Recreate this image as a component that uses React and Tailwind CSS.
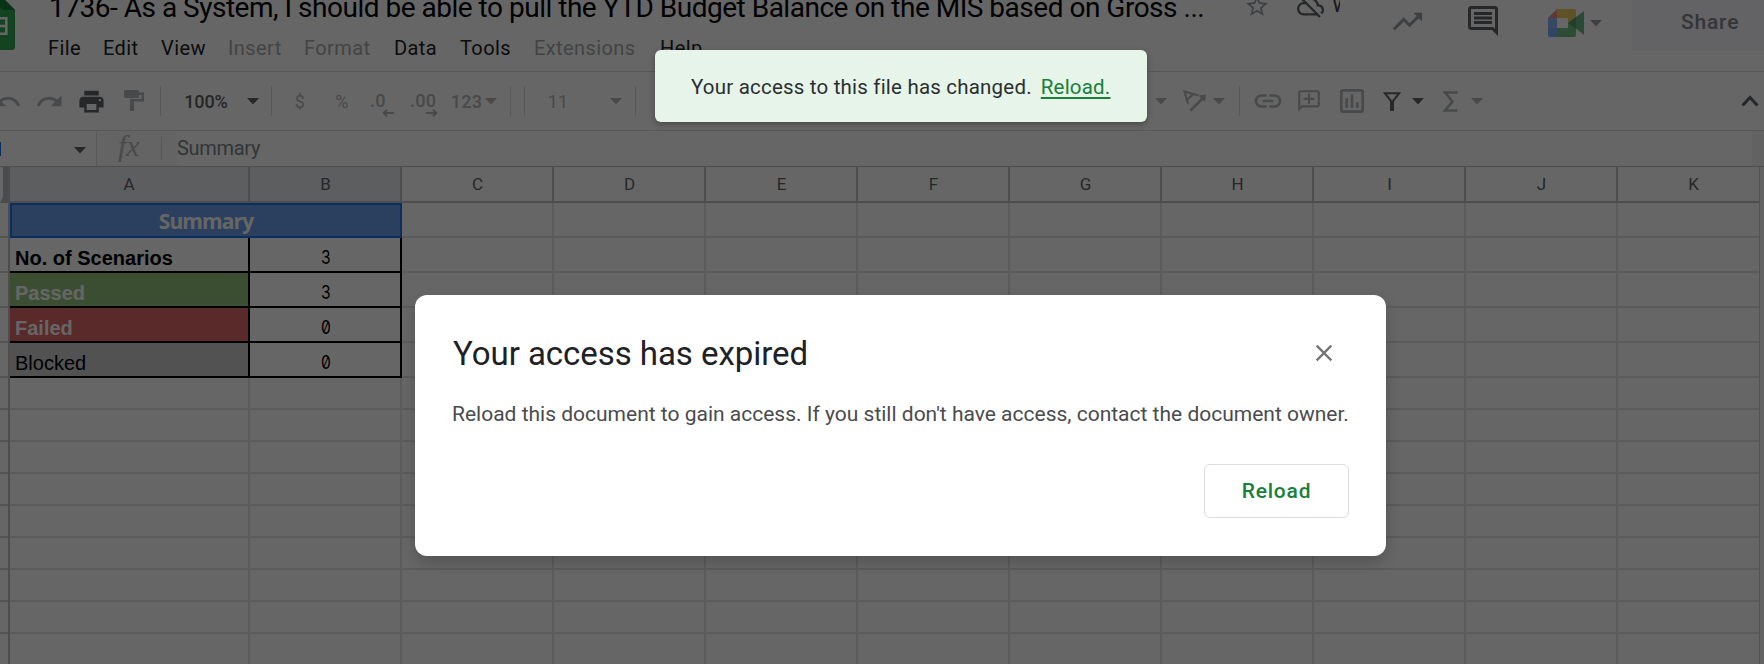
import { MdUndo, MdRedo, MdPrint, MdLink, MdOutlineAddComment, MdOutlineInsertChart, MdStarBorder, MdOutlineCloudOff, MdTrendingUp, MdOutlineInsertComment, MdClose } from "react-icons/md";

const menus = [
  ["File", "w-[55px]", true],
  ["Edit", "w-[58px]", true],
  ["View", "w-[67px]", true],
  ["Insert", "w-[76px]", false],
  ["Format", "w-[90px]", false],
  ["Data", "w-[66px]", true],
  ["Tools", "w-[74px]", true],
  ["Extensions", "w-[126px]", false],
  ["Help", "w-[60px]", true],
];

const letters = ["C", "D", "E", "F", "G", "H", "I", "J", "K"];

const rows = [
  ["No. of Scenarios", "3", "font-bold text-black"],
  ["Passed", "3", "font-bold text-white bg-[#93c47d]"],
  ["Failed", "0", "font-bold text-white bg-[#e06666]"],
  ["Blocked", "0", "text-black bg-[#cccccc]"],
];

function Caret({ className = "" }) {
  return (
    <svg viewBox="0 0 12 7" className={`h-[7px] w-3 shrink-0 ${className}`}>
      <path d="M0 0h12L6 6.5z" fill="currentColor" />
    </svg>
  );
}

function Sep({ className = "" }) {
  return <div className={`h-[30px] w-px shrink-0 bg-[#dadce0] ${className}`} />;
}

function Slot({ className, children }) {
  return <div className={`flex h-full shrink-0 items-center justify-center ${className}`}>{children}</div>;
}

function DecimalArrow({ right = false }) {
  return (
    <svg viewBox="0 0 12 8" className={`h-2 w-3 ${right ? "-scale-x-100" : ""}`}>
      <path d="M12 4H2M5 .8 1.800 4 5 7.200" fill="none" stroke="currentColor" strokeWidth="2" />
    </svg>
  );
}

function Header() {
  return (
    <header className="flex h-[71px] shrink-0">
      <svg viewBox="0 0 15 50" className="h-[50px] w-[15px] shrink-0">
        <path d="M0 0h5L15 10v37a3 3 0 0 1-3 3H0z" fill="#34a853" />
        <path d="M0 0h5L15 10H3L0 7z" fill="#188038" />
        <path d="M0 18.200h6.300V33.700H0M0 26h6" fill="none" stroke="#fff" strokeWidth="2.600" />
      </svg>
      <div className="ml-[33px] flex w-[1300px] flex-col">
        <div className="flex h-[34px] items-start">
          <div className="-mt-[10px] ml-px w-[1195px] shrink-0 whitespace-nowrap text-[28px] leading-9 tracking-[-0.49px] text-black">
            1736- As a System, I should be able to pull the YTD Budget Balance on the MIS based on Gross ...
          </div>
          <MdStarBorder className="-mt-[7px] size-[26px] shrink-0 text-[#9aa0a6]" />
          <MdOutlineCloudOff className="-mt-[7px] ml-[27px] size-[27px] shrink-0 text-[#5f6368]" />
          <div className="-mt-[9px] ml-[8px] w-[8px] overflow-hidden text-[21px] leading-7 text-[#3c4043]">W</div>
        </div>
        <nav className="flex h-7 items-center text-[20px] tracking-[0.4px]">
          {menus.map(([label, width, enabled]) => (
            <div key={label} className={`${width} shrink-0 ${enabled ? "text-[#202124]" : "text-[#a8aaad]"}`}>{label}</div>
          ))}
        </nav>
      </div>
      <div className="ml-auto flex h-[50px] items-start">
        <MdTrendingUp className="mt-[4px] size-[35px] text-[#9aa0a6]" />
        <MdOutlineInsertComment className="ml-[40px] mt-[3px] size-9 text-[#5f6368]" />
        <svg viewBox="0 0 36 28" className="ml-[47px] mt-[9px] h-7 w-9">
          <path d="M0 9h9v10H0z" fill="#8ab4f8" />
          <path d="M0 9 9 0v9z" fill="#f28b82" />
          <path d="M9 9h11v10H9z" fill="#fff" />
          <path d="M9 0h17a2 2 0 0 1 2 2v6l-8 6V9H9z" fill="#f0cc62" />
          <path d="M0 19h9v9H2a2 2 0 0 1-2-2z" fill="#7baaf7" />
          <path d="M9 19h11v-5l8-6v18a2 2 0 0 1-2 2H9z" fill="#76be8a" />
          <path d="M20 14 36 2v24l-8-6.500z" fill="#6dba85" />
          <path d="M20 14 28 8v12z" fill="#579d6b" />
        </svg>
        <Caret className="ml-[6px] mt-[20px] text-[#9aa0a6]" />
        <div className="ml-[30px] flex h-[50px] w-[132px] items-start bg-[#f8f8fd] pl-[49px] pt-[8px] text-[21px] font-medium leading-7 tracking-[0.8px] text-[#80868b]">Share</div>
      </div>
    </header>
  );
}

function Toolbar() {
  return (
    <div className="flex h-[60px] shrink-0 items-center border-y border-[#dadce0] text-[18px] tracking-[0.2px] text-[#b4b6b9]">
      <Slot className="w-[14px]"><MdUndo className="size-[29px] shrink-0" /></Slot>
      <Slot className="ml-[17px] w-9"><MdRedo className="size-[29px]" /></Slot>
      <Slot className="ml-[6px] w-9 text-[#5f6368]"><MdPrint className="size-[29px]" /></Slot>
      <Slot className="ml-[7px] w-9">
        <svg viewBox="0 0 20 22" className="h-[22px] w-5">
          <path d="M1.500 0h12A1.500 1.500 0 0 1 15 1.500V2.500h5v9H10V21H6V9h11.500V5H15v1.500A1.500 1.500 0 0 1 13.500 8h-12A1.500 1.500 0 0 1 0 6.500v-5A1.500 1.500 0 0 1 1.500 0z" fill="currentColor" />
        </svg>
      </Slot>
      <Sep className="ml-2" />
      <Slot className="ml-[23px] w-11 font-medium tracking-[-0.1px] text-[#5f6368]">100%</Slot>
      <Caret className="ml-[19px] text-[#5f6368]" />
      <Sep className="ml-3" />
      <Slot className="ml-[18px] w-5">$</Slot>
      <Slot className="ml-[22px] w-5">%</Slot>
      <div className="ml-[18px] flex w-[26px] shrink-0 flex-col pt-[5px] font-medium leading-5">.0<span className="-mt-[2px] ml-3 leading-3"><DecimalArrow /></span></div>
      <div className="ml-[14px] flex w-[30px] shrink-0 flex-col pt-[5px] font-medium leading-5">.00<span className="-mt-[2px] ml-4 leading-3"><DecimalArrow right /></span></div>
      <Slot className="ml-3 w-[29px] font-medium">123</Slot>
      <Caret className="ml-1" />
      <Sep className="ml-[13px]" />
      <Sep className="ml-[13px]" />
      <Slot className="ml-6 w-[18px]">11</Slot>
      <Caret className="ml-[43px]" />
      <Sep className="ml-[13px]" />
      <Caret className="ml-[519px]" />
      <Slot className="ml-[14px] w-7">
        <svg viewBox="0 0 24 22" className="h-[22px] w-6">
          <path d="M5 13.500 1.500 1.500 15.500 5.500M4 9.500 10.500 4" fill="none" stroke="currentColor" strokeWidth="2.200" />
          <path d="M7.500 20.500 20.500 7.500" fill="none" stroke="currentColor" strokeWidth="2.600" />
          <path d="M15.500 5.500 23 4.500 22 12z" fill="currentColor" />
        </svg>
      </Slot>
      <Caret className="ml-1" />
      <Sep className="ml-[14px]" />
      <Slot className="ml-[14px] w-7"><MdLink className="size-8 shrink-0" /></Slot>
      <Slot className="ml-[13px] w-7"><MdOutlineAddComment className="size-[26px] -scale-x-100" /></Slot>
      <Slot className="ml-[15px] w-7"><MdOutlineInsertChart className="size-8 shrink-0" /></Slot>
      <Slot className="ml-3 w-7 text-[#5f6368]">
        <svg viewBox="0 0 18 19" className="h-[19px] w-[18px]">
          <path d="M1.800 1.200h14.400L10 9.200V18H8V9.200z" fill="none" stroke="currentColor" strokeWidth="2" />
        </svg>
      </Slot>
      <Caret className="ml-[6px] text-[#5f6368]" />
      <Slot className="ml-3 w-7">
        <svg viewBox="0 0 16 21" className="h-[21px] w-4">
          <path d="M15.500 1.500H3L10.500 10.500 3 19.500h12.500" fill="none" stroke="currentColor" strokeWidth="2.600" />
        </svg>
      </Slot>
      <Caret className="ml-[7px]" />
      <Slot className="ml-auto mr-1 w-5 text-[#5f6368]">
        <svg viewBox="0 0 18 12" className="h-3 w-[18px]">
          <path d="m1.500 10.500 7.500-8 7.500 8" fill="none" stroke="currentColor" strokeWidth="3" />
        </svg>
      </Slot>
    </div>
  );
}

function FormulaBar() {
  return (
    <div className="flex h-9 shrink-0 items-center border-b border-[#c0c0c0]">
      <div className="h-[14px] w-px bg-[#1a73e8]" />
      <Caret className="ml-[73px] mt-1 text-[#5f6368]" />
      <div className="ml-[10px] flex h-full w-[81px] items-center border-l border-[#dadce0] bg-[#fafafa]">
        <div className="-mt-[6px] ml-[21px] w-[43px] font-['Liberation_Serif'] text-[30px] italic leading-8 text-[#b8b8b8]">fx</div>
        <div className="h-6 w-px bg-[#dadce0]" />
      </div>
      <div className="-mt-[2px] text-[20px] tracking-[-0.3px] text-[#80868b]">Summary</div>
      <div className="ml-auto h-full w-3 bg-[#f6f6f6]" />
    </div>
  );
}

function Sheet() {
  return (
    <div className="flex min-h-0 flex-1 overflow-hidden">
      <div className="w-[10px] shrink-0 border-r-2 border-[#c0c0c0]">
        <div className="h-9 border-b-[6px] border-l-[3px] border-b-[#bcbcbc] border-l-white bg-[#bcbcbc]" />
        {[0, 1, 2, 3, 4].map((i) => <div key={i} className="h-[35px] border-b-2 border-[#d0d0d0]" />)}
        {[0, 1, 2, 3, 4, 5, 6, 7, 8, 9].map((i) => <div key={i} className="h-8 border-b-2 border-[#d0d0d0]" />)}
      </div>
      <div className="flex w-[1750px] shrink-0 flex-col overflow-hidden border-r border-[#d0d0d0]">
        <div className="flex h-9 shrink-0 text-center text-[17px] leading-[35px] text-[#5f6368]">
          <div className="w-60 shrink-0 border-b-2 border-r-2 border-[#c0c0c0] bg-[#e8eaed]">A</div>
          <div className="w-[152px] shrink-0 border-b-2 border-r-2 border-[#c0c0c0] bg-[#e8eaed] pl-px">B</div>
          {letters.map((l) => <div key={l} className="w-[152px] shrink-0 border-b-2 border-r-2 border-[#c0c0c0] pl-px">{l}</div>)}
        </div>
        <div className="flex h-[35px] shrink-0">
          <div className="flex w-[392px] shrink-0 items-center justify-center border-2 border-[#1a73e8] bg-[#6d9eeb] font-['Open_Sans'] text-[21px] font-bold leading-7 tracking-[-0.9px] text-white">Summary</div>
          {letters.map((l) => <div key={l} className="w-[152px] shrink-0 border-b-2 border-r-2 border-[#e2e3e3]" />)}
        </div>
        {rows.map(([name, value, style]) => (
          <div key={name} className="flex h-[35px] shrink-0">
            <div className={`w-60 shrink-0 border-b-2 border-r-2 border-black pl-[5px] pt-[6px] font-['Liberation_Sans'] text-[20px] leading-7 ${style}`}>{name}</div>
            <div className="w-[152px] shrink-0 border-b-2 border-r-2 border-black pl-px pt-[6px] text-center font-['Inter'] text-[19px] leading-7 text-black">
              <span className="inline-block scale-x-[0.82] slashed-zero">{value}</span>
            </div>
            {letters.map((l) => <div key={l} className="w-[152px] shrink-0 border-b-2 border-r-2 border-[#e2e3e3]" />)}
          </div>
        ))}
        {[0, 1, 2, 3, 4, 5, 6, 7, 8, 9].map((i) => (
          <div key={i} className="flex h-8 shrink-0">
            <div className="w-60 shrink-0 border-b-2 border-r-2 border-[#e2e3e3]" />
            <div className="w-[152px] shrink-0 border-b-2 border-r-2 border-[#e2e3e3]" />
            {letters.map((l) => <div key={l} className="w-[152px] shrink-0 border-b-2 border-r-2 border-[#e2e3e3]" />)}
          </div>
        ))}
      </div>
      <div className="flex-1 bg-[#f8f8f8]" />
    </div>
  );
}

export default function App() {
  return (
    <div className="relative flex h-[664px] w-[1764px] flex-col overflow-hidden bg-white font-['Roboto',sans-serif]">
      <Header />
      <Toolbar />
      <FormulaBar />
      <Sheet />
      <div className="absolute inset-0 bg-black/60" />
      <div className="absolute left-[655px] top-[50px] flex h-[72px] w-[492px] items-center rounded-[6px] bg-[#e6f4ea] pl-[36px] pt-[2px] text-[20.5px] tracking-[0.2px] text-[#2c2e31] shadow-[0_2px_6px_rgba(0,0,0,0.3)]">
        <span className="whitespace-nowrap">Your access to this file has changed.</span>
        <a className="ml-[9px] text-[#188038] underline decoration-2 underline-offset-[3px]">Reload.</a>
      </div>
      <div className="absolute left-[415px] top-[295px] flex h-[261px] w-[971px] flex-col rounded-xl bg-white px-[37px] shadow-[0_6px_14px_rgba(0,0,0,0.18)]">
        <div className="flex items-center pt-[37px]">
          <h1 className="ml-px whitespace-nowrap text-[33px] leading-[44px] tracking-[-0.05px] text-[#202124]">Your access has expired</h1>
          <MdClose className="-mt-[3px] ml-auto mr-[11px] size-7 text-[#757575]" />
        </div>
        <p className="mt-[24px] whitespace-nowrap text-[21px] leading-7 text-[#4a4b4d]">Reload this document to gain access. If you still don't have access, contact the document owner.</p>
        <button className="ml-auto mt-[36px] h-[54px] w-[145px] rounded-[6px] border border-[#dadce0] pt-px text-[21px] font-medium tracking-[0.8px] text-[#188038]">Reload</button>
      </div>
    </div>
  );
}
